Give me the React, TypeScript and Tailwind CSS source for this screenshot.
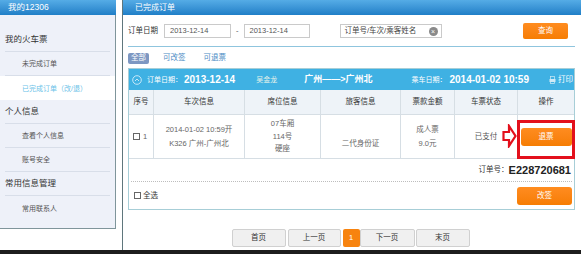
import React from 'react';

const SideCat: React.FC<{ children: React.ReactNode }> = ({ children }) => (
  <div className="mx-[5px] h-[24px] border-b border-[#d8dee9] flex items-center text-[8.5px] text-[#333]">{children}</div>
);

const SideItem: React.FC<{ children: React.ReactNode; active?: boolean; last?: boolean }> = ({ children, active, last }) =>
  active ? (
    <div className="h-[24px] bg-white flex items-center pl-[22px] text-[7px] text-[#6bc2e8]">{children}</div>
  ) : (
    <div className={`mx-[5px] h-[24px] flex items-center pl-[17px] text-[7px] text-[#555] ${last ? '' : 'border-b border-[#d8dee9]'}`}>{children}</div>
  );

const Checkbox = () => <span className="inline-block w-[7px] h-[7px] border border-[#666] bg-white" />;

const PageBtn: React.FC<{ children: React.ReactNode; w: string; active?: boolean }> = ({ children, w, active }) => (
  <div
    className={`${w} h-[18px] flex items-center justify-center rounded-[2px] text-[7.5px] ${
      active ? 'bg-[#f7830f] text-white' : 'bg-[#f0f0f0] border border-[#d0d0d0] text-[#333]'
    }`}
  >
    {children}
  </div>
);

export default function App() {
  const cols = ['序号', '车次信息', '席位信息', '旅客信息', '票款金额', '车票状态', '操作'];

  return (
    <div className="w-[581px] h-[254px] flex flex-col bg-white font-['Liberation_Sans','Noto_Sans_CJK_SC',sans-serif] leading-none overflow-hidden">
      <div className="h-[250px] flex">
        {/* Sidebar */}
        <aside className="w-[116px] flex flex-col">
          <div className="h-[15px] bg-linear-to-b from-[#55ace6] to-[#1f7fc7] text-white text-[8.5px] pl-[8px] flex items-center">我的12306</div>
          <div className="h-[214px] bg-[#eef1f9] border-r border-b border-[#7f959b] pt-[13px]">
            <SideCat>我的火车票</SideCat>
            <SideItem>未完成订单</SideItem>
            <SideItem active>已完成订单（改/退）</SideItem>
            <SideCat>个人信息</SideCat>
            <SideItem>查看个人信息</SideItem>
            <SideItem>账号安全</SideItem>
            <SideCat>常用信息管理</SideCat>
            <SideItem last>常用联系人</SideItem>
          </div>
        </aside>

        {/* Main */}
        <main className="flex-1 ml-[6px] border-l border-[#5f767c] flex flex-col">
          <div className="h-[15px] bg-linear-to-b from-[#55ace6] to-[#1f7fc7] text-white text-[8px] pl-[12px] flex items-center">已完成订单</div>

          <div className="pl-[5px] pr-[6px] flex flex-col">
            {/* Filter */}
            <div className="mt-[8px] h-[16px] flex items-center text-[7.5px] text-[#333]">
              <span>订单日期</span>
              <div className="ml-[6px] w-[67px] h-[14px] border border-[#cacaca] flex items-center pl-[5px] text-[#555]">2013-12-14</div>
              <span className="mx-[5px] text-[#555]">-</span>
              <div className="w-[66px] h-[14px] border border-[#cacaca] flex items-center pl-[5px] text-[#555]">2013-12-14</div>
              <div className="ml-[30px] w-[102px] h-[14px] border border-[#cacaca] flex items-center pl-[4px] pr-[3px] text-[#444]">
                <span className="flex-1">订单号/车次/乘客姓名</span>
                <span className="w-[9px] h-[9px] rounded-full bg-[#8a8a8a] text-white text-[7px] flex items-center justify-center">×</span>
              </div>
              <div className="ml-auto mr-[7px] w-[45px] h-[16px] rounded-[2px] bg-linear-to-b from-[#ff8c1f] to-[#f67d02] text-white flex items-center justify-center">查询</div>
            </div>

            <div className="mt-[7px] h-px bg-[#8fc5de]" />

            {/* Tabs */}
            <div className="mt-[5px] h-[12px] flex items-center text-[7.5px]">
              <span className="w-[21px] h-[11px] rounded-[2px] bg-[#7d97c2] text-white flex items-center justify-center">全部</span>
              <span className="ml-[14px] text-[#4b8bc4]">可改签</span>
              <span className="ml-[18px] text-[#4b8bc4]">可退票</span>
            </div>

            {/* Order card */}
            <div className="mt-[4px] border border-[#a7ced7] flex flex-col">
              <div className="h-[21px] bg-[#3fb1e3] flex items-center text-white text-[7px]">
                <svg className="ml-[3px]" width="10" height="10" viewBox="0 0 10 10">
                  <circle cx="5" cy="5" r="4.3" fill="none" stroke="#e6f5fc" strokeWidth="0.8" />
                  <path d="M3 6 L5 4 L7 6" fill="none" stroke="#e6f5fc" strokeWidth="0.8" />
                </svg>
                <span className="ml-[5px]">订单日期：</span>
                <span className="ml-[2px] font-bold text-[10px]">2013-12-14</span>
                <span className="ml-[21px] text-[#e4f2ea]">吴金龙</span>
                <span className="ml-[27px] font-bold text-[9px]">广州——&gt;广州北</span>
                <span className="ml-auto">乘车日期：</span>
                <span className="ml-[3px] font-bold text-[10px]">2014-01-02 10:59</span>
                <svg className="ml-[20px]" width="7" height="8" viewBox="0 0 7 8">
                  <rect x="1.5" y="0.5" width="4" height="3" fill="none" stroke="#cfeaf6" strokeWidth="0.7" />
                  <rect x="0.5" y="3" width="6" height="3" fill="#cfeaf6" />
                  <rect x="1.5" y="5.5" width="4" height="2" fill="none" stroke="#cfeaf6" strokeWidth="0.7" />
                </svg>
                <span className="ml-[2px] mr-[1px] text-[7.5px]">打印</span>
              </div>

              {/* Table */}
              <div className="grid grid-cols-[25px_91px_76px_80px_54px_63px_56px] text-[7.5px]">
                {cols.map((c, i) => (
                  <div
                    key={c}
                    className={`h-[25px] bg-[#eef3f8] border-b border-[#d6dee4] flex items-center justify-center text-[#333] ${i < 6 ? 'border-r' : ''}`}
                  >
                    {c}
                  </div>
                ))}
              </div>
              <div className="relative grid grid-cols-[25px_91px_76px_80px_54px_63px_56px] text-[7.5px] text-[#666]">
                <div className="h-[44px] border-r border-b border-[#d6dee4] flex items-center pl-[4px] gap-[3px]">
                  <Checkbox />
                  <span>1</span>
                </div>
                <div className="h-[44px] border-r border-b border-[#d6dee4] flex flex-col items-center justify-center gap-[6px]">
                  <span>2014-01-02 10:59开</span>
                  <span>K326 广州-广州北</span>
                </div>
                <div className="h-[44px] border-r border-b border-[#d6dee4] flex flex-col items-center justify-center gap-[5px]">
                  <span>07车厢</span>
                  <span>114号</span>
                  <span>硬座</span>
                </div>
                <div className="h-[44px] border-r border-b border-[#d6dee4] flex flex-col items-center justify-center gap-[6px]">
                  <span>&nbsp;</span>
                  <span>二代身份证</span>
                </div>
                <div className="h-[44px] border-r border-b border-[#d6dee4] flex flex-col items-center justify-center gap-[6px]">
                  <span>成人票</span>
                  <span>9.0元</span>
                </div>
                <div className="h-[44px] border-r border-b border-[#d6dee4] flex items-center justify-center text-[#555]">已支付</div>
                <div className="h-[44px] border-b border-[#d6dee4] flex items-center justify-center">
                  <div className="w-[51px] h-[18px] rounded-[3px] bg-linear-to-b from-[#ff8c1f] to-[#f67d02] text-white flex items-center justify-center">退票</div>
                </div>

                {/* red annotation */}
                <svg className="absolute left-[373px] top-[9px]" width="15" height="24" viewBox="0 0 15 24">
                  <polygon points="1.5,8 7,8 7,2 13.5,12 7,22 7,16 1.5,16" fill="white" stroke="#e3101c" strokeWidth="2.2" strokeLinejoin="miter" />
                </svg>
                <div className="absolute left-[388px] top-[5px] w-[58px] h-[39px] border-[3px] border-[#e3101c]" />
              </div>

              <div className="h-[23px] mx-[2px] border-b border-dotted border-[#bdbdbd] flex items-center justify-end pr-[1px]">
                <span className="text-[7.5px] text-[#333]">订单号：</span>
                <span className="font-bold text-[11px] text-[#222]">E228720681</span>
              </div>
              <div className="h-[27px] flex items-center pl-[5px] text-[7.5px] text-[#333]">
                <Checkbox />
                <span className="ml-[2px]">全选</span>
                <div className="ml-auto mr-[2px] w-[55px] h-[18px] rounded-[3px] bg-linear-to-b from-[#ff8c1f] to-[#f67d02] text-white flex items-center justify-center">改签</div>
              </div>
            </div>

            {/* Pagination */}
            <div className="mt-[19px] flex justify-center pr-[2px]">
              <PageBtn w="w-[54px]">首页</PageBtn>
              <div className="w-[2px]" />
              <PageBtn w="w-[53px]">上一页</PageBtn>
              <div className="w-[2px]" />
              <PageBtn w="w-[17px]" active>1</PageBtn>
              <PageBtn w="w-[55px]">下一页</PageBtn>
              <div className="w-[1px]" />
              <PageBtn w="w-[54px]">末页</PageBtn>
            </div>
          </div>
        </main>
      </div>
      <div className="h-[4px] bg-[#1d1d1d]" />
    </div>
  );
}
